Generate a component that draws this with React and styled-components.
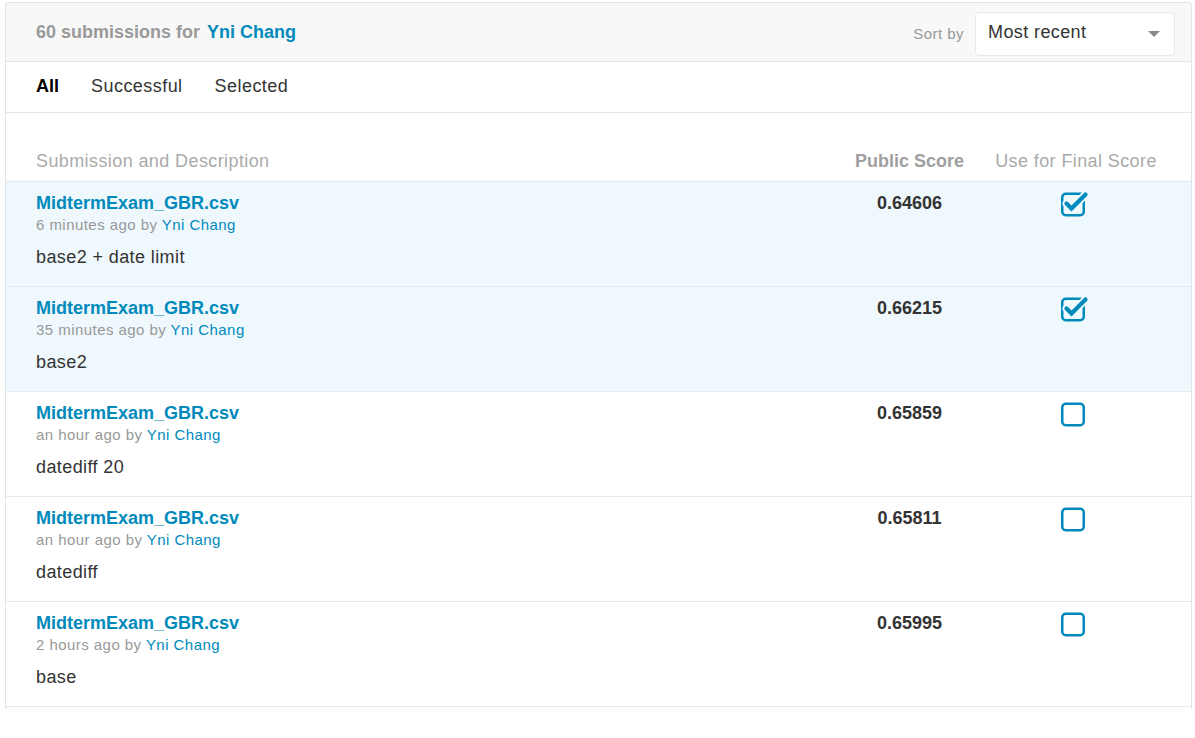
import styled, { createGlobalStyle } from 'styled-components';

const BLUE = '#008abc';

const submissions = [
  { id: 1, file: 'MidtermExam_GBR.csv', when: '6 minutes ago', by: 'Yni Chang', desc: 'base2 + date limit', score: '0.64606', selected: true },
  { id: 2, file: 'MidtermExam_GBR.csv', when: '35 minutes ago', by: 'Yni Chang', desc: 'base2', score: '0.66215', selected: true },
  { id: 3, file: 'MidtermExam_GBR.csv', when: 'an hour ago', by: 'Yni Chang', desc: 'datediff 20', score: '0.65859', selected: false },
  { id: 4, file: 'MidtermExam_GBR.csv', when: 'an hour ago', by: 'Yni Chang', desc: 'datediff', score: '0.65811', selected: false },
  { id: 5, file: 'MidtermExam_GBR.csv', when: '2 hours ago', by: 'Yni Chang', desc: 'base', score: '0.65995', selected: false },
];

const tabs = ['All', 'Successful', 'Selected'];

function CheckIcon({ checked, bg }) {
  return (
    <svg width="28" height="27" viewBox="0 0 28 27">
      <rect x="1.25" y="3.75" width="21.5" height="21.5" rx="3.5" fill="none" stroke={BLUE} strokeWidth="2.5" />
      {checked && (
        <>
          <polyline points="5.5,13.5 10.5,18.5 24.5,4.5" fill="none" stroke={bg} strokeWidth="8" strokeLinecap="round" strokeLinejoin="round" />
          <polyline points="5.5,13.5 10.5,18.5 24.5,4.5" fill="none" stroke={BLUE} strokeWidth="4.2" strokeLinecap="round" strokeLinejoin="miter" />
        </>
      )}
    </svg>
  );
}

export default function App() {
  return (
    <>
      <GlobalStyle />
      <Panel>
        <Header>
          <Title>
            60 submissions for <TitleLink>Yni Chang</TitleLink>
          </Title>
          <SortWrap>
            <SortLabel>Sort by</SortLabel>
            <SortSelect>
              <span>Most recent</span>
              <Caret />
            </SortSelect>
          </SortWrap>
        </Header>
        <Tabs>
          {tabs.map((t, i) => (
            <Tab key={t} active={i === 0}>{t}</Tab>
          ))}
        </Tabs>
        <TableHead>
          <HeadCell>Submission and Description</HeadCell>
          <HeadCell bold center>Public Score</HeadCell>
          <HeadCell center>Use for Final Score</HeadCell>
        </TableHead>
        {submissions.map((s) => (
          <Row key={s.id} selected={s.selected}>
            <div>
              <FileName>{s.file}</FileName>
              <Meta>
                {s.when} by <MetaLink>{s.by}</MetaLink>
              </Meta>
              <Description>{s.desc}</Description>
            </div>
            <Score>{s.score}</Score>
            <CheckCell>
              <CheckIcon checked={s.selected} bg={s.selected ? '#eff8fd' : '#ffffff'} />
            </CheckCell>
          </Row>
        ))}
      </Panel>
    </>
  );
}

const GlobalStyle = createGlobalStyle`
  body {
    margin: 0;
    background: #ffffff;
    font-family: "Liberation Sans", Arial, sans-serif;
  }
`;

const Panel = styled.div`
  margin: 2px 3px 0 5px;
  border: 1px solid #e1e3e5;
  border-bottom: none;
  border-radius: 4px 4px 0 0;
  padding-bottom: 2px;
`;

const Header = styled.div`
  display: flex;
  align-items: center;
  justify-content: space-between;
  height: 58px;
  padding: 0 16px 0 30px;
  background: #f8f8f8;
  border-bottom: 1px solid #e6e6e6;
  border-radius: 4px 4px 0 0;
`;

const Title = styled.div`
  font-size: 18px;
  font-weight: bold;
  color: #9a9a9a;
`;

const TitleLink = styled.span`
  color: ${BLUE};
  margin-left: 2px;
`;

const SortWrap = styled.div`
  display: flex;
  align-items: center;
  gap: 11px;
  margin-top: 3px;
`;

const SortLabel = styled.span`
  font-size: 15px;
  letter-spacing: 0.45px;
  color: #999999;
`;

const SortSelect = styled.div`
  display: flex;
  align-items: center;
  justify-content: space-between;
  box-sizing: border-box;
  width: 200px;
  height: 44px;
  padding: 0 14px 2px 12px;
  background: #ffffff;
  border: 1px solid #e8e8e8;
  border-radius: 4px;
  font-size: 18px;
  letter-spacing: 0.4px;
  color: #333333;
`;

const Caret = styled.span`
  width: 0;
  height: 0;
  border-left: 6px solid transparent;
  border-right: 6px solid transparent;
  border-top: 6px solid #8a8a8a;
  margin-top: 2px;
`;

const Tabs = styled.div`
  display: flex;
  align-items: center;
  gap: 32px;
  height: 51px;
  padding: 0 30px 2px;
  box-sizing: border-box;
  border-bottom: 1px solid #e6e6e6;
`;

const Tab = styled.span`
  font-size: 18px;
  letter-spacing: ${(p) => (p.active ? '0' : '0.45px')};
  font-weight: ${(p) => (p.active ? 'bold' : 'normal')};
  color: ${(p) => (p.active ? '#000000' : '#333333')};
`;

const grid = `
  display: grid;
  grid-template-columns: 1fr 133px 200px;
  padding: 0 15px 0 30px;
`;

const TableHead = styled.div`
  ${grid}
  padding-top: 36px;
  padding-bottom: 8px;
  line-height: 24px;
`;

const HeadCell = styled.div`
  font-size: 18px;
  font-weight: ${(p) => (p.bold ? 'bold' : 'normal')};
  letter-spacing: ${(p) => (p.bold ? '0' : '0.4px')};
  color: ${(p) => (p.bold ? '#a0a0a0' : '#aaaaaa')};
  text-align: ${(p) => (p.center ? 'center' : 'left')};
`;

const Row = styled.div`
  ${grid}
  padding-top: 10px;
  padding-bottom: 17px;
  border-top: 1px solid ${(p) => (p.selected ? '#dbe9f1' : '#e6e8ea')};
  background: ${(p) => (p.selected ? '#eff8fd' : '#ffffff')};

  &:last-child {
    border-bottom: 1px solid #e6e8ea;
  }
`;

const FileName = styled.div`
  font-size: 18px;
  font-weight: bold;
  line-height: 22px;
  color: ${BLUE};
`;

const Meta = styled.div`
  font-size: 15px;
  letter-spacing: 0.45px;
  line-height: 22px;
  color: #999999;
`;

const MetaLink = styled.span`
  color: ${BLUE};
`;

const Description = styled.div`
  margin-top: 9px;
  font-size: 18px;
  letter-spacing: 0.4px;
  line-height: 24px;
  color: #333333;
`;

const Score = styled.div`
  font-size: 18px;
  font-weight: bold;
  line-height: 22px;
  color: #333333;
  text-align: center;
`;

const CheckCell = styled.div`
  display: flex;
  justify-content: center;
  padding-right: 3px;
  margin-top: -2px;
`;
